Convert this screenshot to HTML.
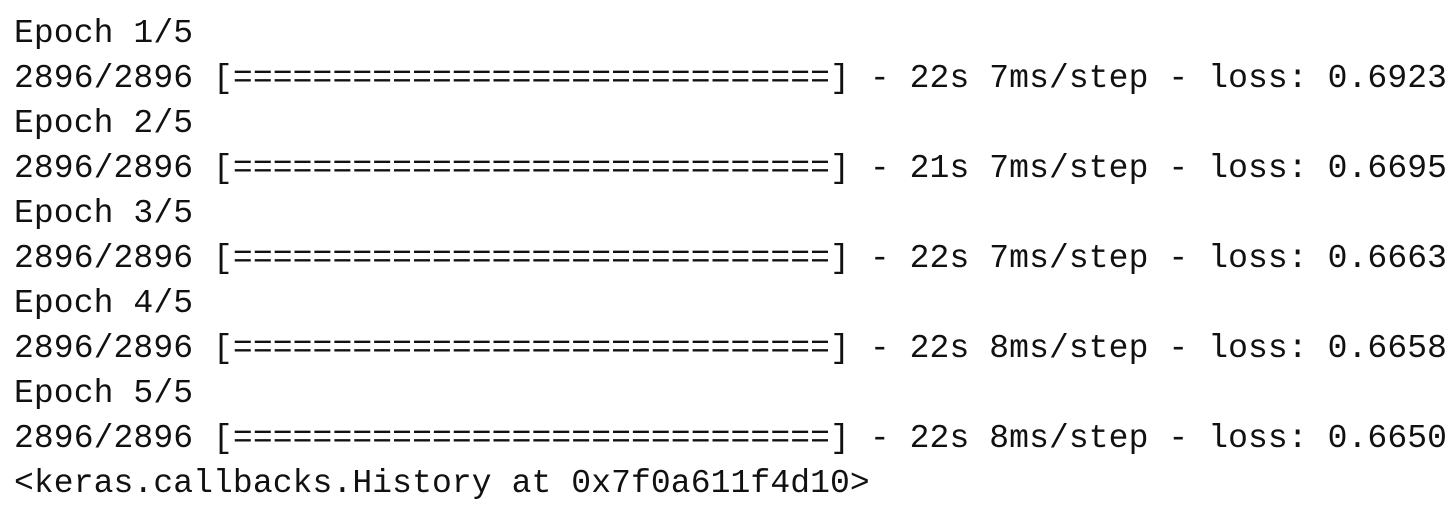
<!DOCTYPE html>
<html><head><meta charset="utf-8"><style>
html,body{margin:0;padding:0;background:#fff;width:1455px;height:521px;overflow:hidden}
pre{margin:0;position:absolute;left:14px;top:11px;font-family:"Liberation Mono","DejaVu Sans Mono",monospace;font-size:33px;letter-spacing:0.1px;line-height:45px;color:#111}
</style></head><body><pre>Epoch 1/5
2896/2896 [==============================] - 22s 7ms/step - loss: 0.6923
Epoch 2/5
2896/2896 [==============================] - 21s 7ms/step - loss: 0.6695
Epoch 3/5
2896/2896 [==============================] - 22s 7ms/step - loss: 0.6663
Epoch 4/5
2896/2896 [==============================] - 22s 8ms/step - loss: 0.6658
Epoch 5/5
2896/2896 [==============================] - 22s 8ms/step - loss: 0.6650
&lt;keras.callbacks.History at 0x7f0a611f4d10&gt;</pre></body></html>
